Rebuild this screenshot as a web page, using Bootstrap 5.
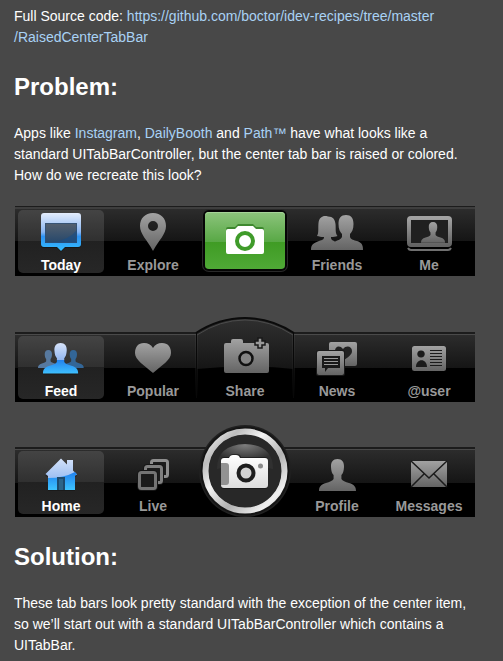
<!DOCTYPE html>
<html lang="en">
<head>
<meta charset="utf-8">
<meta name="viewport" content="width=device-width, initial-scale=1">
<title>Raised Center Tab Bar</title>
<link href="https://cdn.jsdelivr.net/npm/bootstrap@5.3.0/dist/css/bootstrap.min.css" rel="stylesheet">
<style>
body{background:#484848;color:#fff;font:14px/21px "Liberation Sans",Arial,sans-serif}
.article{padding:6px 28px 0 14px}
.article p{margin:0}
.article a{color:#a9d2f5;text-decoration:none}
.article h2{font-size:24px;line-height:28px;font-weight:700;margin:25px 0 22px}
.tabbar{margin:0 0 0 1px;height:70px;background:linear-gradient(#1c1c1c 0 1px,#3e3e3e 1px 3px,#2c2c2c 3px,#151515 35px,#000 35px)}
.tabbar.thin{background:linear-gradient(#1c1c1c 0 2px,#4a4a4a 2px 3px,#2c2c2c 3px,#151515 36px,#000 36px)}
.tabs-one{margin-top:20px}
.tabs-two{margin-top:56px}
.tabs-three{margin-top:45px}
.article .tabs-three + h2{margin-top:26px}
.tab{flex:1 1 0;min-width:0;margin:4px 3px 3px;padding:0;border:0;border-radius:5px;background:none;color:#999;font-weight:700;line-height:16px}
.tab svg{width:86px;height:47px;flex:none;overflow:visible}
.tab.current{color:#fff;background:linear-gradient(#444,#303030 31px,#212121 31px,#272727)}
.tab .raised{position:absolute;left:50%;bottom:-3px;transform:translateX(-50%);width:104px;height:96px}
.tab .front{position:relative}
.green-key{margin:2px 3px 4px;flex:1;border-radius:4px;background:linear-gradient(#8cc47c,#58a845 30px,#3f9b24 30px,#4fa936);box-shadow:inset 0 1px #a5d398,0 0 0 2px #050505,0 0 0 3px #292929}
.green-key svg{width:80px;height:57px}
</style>
<script src="https://cdn.jsdelivr.net/npm/bootstrap@5.3.0/dist/js/bootstrap.bundle.min.js"></script>
</head>
<body>
<svg class="position-absolute" width="0" height="0" aria-hidden="true">
  <defs>
    <linearGradient id="grey" x1="0" y1="0" x2="0" y2="1"><stop stop-color="#a2a2a2"/><stop offset="1" stop-color="#646464"/></linearGradient>
    <linearGradient id="pale" x1="0" y1="0" x2="0" y2="1"><stop stop-color="#d4e2fa"/><stop offset=".6" stop-color="#9fc0f2"/><stop offset="1" stop-color="#7fb0f2"/></linearGradient>
    <linearGradient id="azure" x1="0" y1="0" x2="0" y2="1"><stop stop-color="#2080ee"/><stop offset="1" stop-color="#3ec4ff"/></linearGradient>
    <linearGradient id="bubble" x1="0" y1="0" x2="0" y2="1"><stop stop-color="#e4edfc"/><stop offset=".5" stop-color="#8ab6f2"/><stop offset=".62" stop-color="#2d93f3"/><stop offset="1" stop-color="#35bdff"/></linearGradient>
    <linearGradient id="screen" x1="0" y1="0" x2="0" y2="1"><stop stop-color="#56616f"/><stop offset="1" stop-color="#25476b"/></linearGradient>
    <linearGradient id="duo" gradientUnits="userSpaceOnUse" x1="0" y1="0" x2="0" y2="32"><stop stop-color="#d7e3fa"/><stop offset=".55" stop-color="#93b7ef"/><stop offset=".57" stop-color="#2483ee"/><stop offset="1" stop-color="#3ec0ff"/></linearGradient>
    <linearGradient id="dome" gradientUnits="userSpaceOnUse" x1="0" y1="12" x2="0" y2="62"><stop stop-color="#303030"/><stop offset="1" stop-color="#161616"/></linearGradient>
    <linearGradient id="fade" gradientUnits="userSpaceOnUse" x1="0" y1="27" x2="0" y2="92"><stop stop-color="#444"/><stop offset="1" stop-color="#000"/></linearGradient>
    <linearGradient id="steel" x1="0" y1="0" x2="1" y2="1"><stop stop-color="#fafafa"/><stop offset=".2" stop-color="#bdbdbd"/><stop offset=".38" stop-color="#f4f4f4"/><stop offset=".62" stop-color="#b2b2b2"/><stop offset=".85" stop-color="#f0f0f0"/><stop offset="1" stop-color="#c4c4c4"/></linearGradient>
    <radialGradient id="glass" cx=".5" cy=".05" r=".6"><stop stop-color="#7c7c7c"/><stop offset="1" stop-color="#303030"/></radialGradient>
    <linearGradient id="white" x1="0" y1="0" x2="0" y2="1"><stop stop-color="#fff"/><stop offset="1" stop-color="#dcdcdc"/></linearGradient>
    <path id="person" d="M18.5 0C23 0 25.3 3.2 25 8c-.2 4-1 6.500-2.600 8v4c1 2 4 2.800 7.600 4 5 1.600 7 3.500 7 8H0c0-4.500 2-6.400 7-8 3.600-1.200 6.600-2 7.600-4v-4C13 14.500 12.200 12 12 8c-.3-4.800 2-8 6.500-8z"/>
  </defs>
</svg>
<main class="article">
  <p>Full Source code: <a href="#source">https://github.com/boctor/idev-recipes/tree/master<wbr>/RaisedCenterTabBar</a></p>
  <h2>Problem:</h2>
  <p>Apps like <a href="#instagram">Instagram</a>, <a href="#dailybooth">DailyBooth</a> and <a href="#path">Path™</a> have what looks like a standard UITabBarController, but the center tab bar is raised or colored. How do we recreate this look?</p>

  <nav class="tabbar tabs-one d-flex" aria-label="Instagram tabs">
    <button type="button" class="tab current d-flex flex-column align-items-center">
      <svg viewBox="0 0 86 47" aria-hidden="true"><path d="M26 4h34q3 0 3 3v28q0 3-3 3H47l-4 4-4-4H26q-3 0-3-3V7q0-3 3-3z" fill="#0b0b0b" opacity=".5"/><path d="M26 3h34q3 0 3 3v28q0 3-3 3H47l-4 4-4-4H26q-3 0-3-3V6q0-3 3-3z" fill="url(#bubble)"/><path d="M27 13h32v20H27z" fill="url(#screen)"/><path d="M59 20v13H33q18-3 26-13z" fill="#174f88" opacity=".6"/><path d="M27.500 13.500h31v19h-31z" fill="none" stroke="#2c5078" opacity=".7"/></svg>
      <span>Today</span></button>
    <button type="button" class="tab d-flex flex-column align-items-center">
      <svg viewBox="0 0 86 47" aria-hidden="true"><path fill="url(#grey)" fill-rule="evenodd" d="M43 3c8 0 13 5.500 13 13 0 8-7 14-13 25-6-11-13-17-13-25C30 8.500 35 3 43 3zm0 8a5 5 0 1 0 0 10 5 5 0 0 0 0-10z"/></svg>
      <span>Explore</span></button>
    <button type="button" class="tab d-flex" aria-label="Camera">
      <span class="green-key d-flex justify-content-center"><svg viewBox="0 0 80 57" aria-hidden="true"><path d="M23 16q-2 0-2 2v22q0 2 2 2h34q2 0 2-2V18q0-2-2-2h-6l-3-3H33l-3 3z" fill="#28751a" opacity=".7" transform="translate(0 -1)"/><path d="M23 17q-2 0-2 2v21q0 2 2 2h34q2 0 2-2V19q0-2-2-2h-6l-3-3H33l-3 3z" fill="#fff"/><circle cx="40" cy="29" r="8" fill="#fff" stroke="#3f9b2a" stroke-width="4"/></svg></span>
    </button>
    <button type="button" class="tab d-flex flex-column align-items-center">
      <svg viewBox="0 0 86 47" aria-hidden="true"><path fill="url(#grey)" d="M17 40c0-6 3-7 8-9 4-1 5-2 5-4-3 0-5-.5-7-1 2-3 1-8 1.500-13C25 8 28 6 31 6c1 0 2 0 3 .5 5 0 7 3 7.500 7.500.5 5-.5 9 2 12-2 .7-4 1-6.500 1 0 3 1 3 4 4.500 3-1.500 6-2 7-4.500v-3c-2-2-3.500-5-3.500-10C44.500 8 47 5 52 5s7.500 3 7.500 9c0 5-1.500 8-3.500 10v3c1 3 4 3 7 4 4 1.500 6 3 6 9z"/></svg>
      <span>Friends</span></button>
    <button type="button" class="tab d-flex flex-column align-items-center">
      <svg viewBox="0 0 86 47" aria-hidden="true"><rect x="23" y="8" width="41" height="27" rx="2" fill="#202020" stroke="url(#grey)" stroke-width="4"/><path d="M22 38q1 2 3 2h37q2 0 3-2" fill="none" stroke="#707070" stroke-width="2"/><use href="#person" fill="url(#grey)" transform="translate(35 12) scale(.65)"/></svg>
      <span>Me</span></button>
  </nav>

  <nav class="tabbar thin tabs-two d-flex" aria-label="DailyBooth tabs">
    <button type="button" class="tab current d-flex flex-column align-items-center">
      <svg viewBox="0 0 86 47" aria-hidden="true"><use href="#person" fill="#57799f" transform="translate(20 14) scale(.56)"/><use href="#person" fill="#336697" transform="translate(45 14) scale(.56)"/><use href="#person" fill="#111" opacity=".5" transform="translate(25 8) scale(.95)"/><use href="#person" fill="url(#duo)" transform="translate(25 7) scale(.95)"/></svg>
      <span>Feed</span></button>
    <button type="button" class="tab d-flex flex-column align-items-center">
      <svg viewBox="0 0 86 47" aria-hidden="true"><path fill="url(#grey)" d="M43 12C45 8.500 48 7 52 7c6 0 9 4 9 10 0 7-9 12-18 20-9-8-18-13-18-20 0-6 3-10 9-10 4 0 7 1.500 9 5z"/></svg>
      <span>Popular</span></button>
    <button type="button" class="tab position-relative d-flex flex-column align-items-center">
      <svg class="raised" viewBox="0 0 104 96" aria-hidden="true"><path d="M3 96V27Q26 12 52 12T101 27v69z" fill="#000"/><path d="M3 63V27Q26 12 52 12T101 27v36Q52 58 3 63z" fill="url(#dome)"/><path d="M3 27Q26 12 52 12T101 27" fill="none" stroke="#0b0b0b" stroke-width="2"/><path d="M4 29Q27 14 52 14t48 15" fill="none" stroke="#4b4b4b"/><path d="M3.500 27v65M100.500 27v65" stroke="#080808"/><path d="M4.500 29v61M99.500 29v61M2.500 29v61M101.500 29v61" stroke="url(#fade)" opacity=".5"/></svg>
      <svg class="front" viewBox="0 0 86 47" aria-hidden="true"><path d="M24 7h5V5q0-2 2-2h8q2 0 2 2v2h24q2 0 2 2v26q0 2-2 2H24q-2 0-2-2V9q0-2 2-2z" fill="url(#grey)"/><circle cx="44" cy="22.500" r="6.500" fill="#858585" stroke="#111" stroke-width="2.500"/><path d="M56 2h4v3h3v4h-3v3h-4V9h-3V5h3z" fill="#999" stroke="#181818" stroke-width="1.500"/></svg>
      <span class="front">Share</span></button>
    <button type="button" class="tab d-flex flex-column align-items-center">
      <svg viewBox="0 0 86 47" aria-hidden="true"><rect x="35" y="6" width="28" height="24" rx="2" fill="url(#grey)"/><path d="M49 13c3-4 9-3 9 2 0 4-4 6-9 10-5-4-8-6-8-10 0-5 5-6 8-2z" fill="#222"/><rect x="22" y="14" width="29" height="26" rx="2.500" fill="#191919"/><rect x="23" y="15" width="27" height="24" rx="2" fill="url(#grey)"/><path d="M28 20h18v12H34l-3 4v-4h-3z" fill="#191919"/><path d="M30 22.500h14M30 25.500h14M30 28.500h14" stroke="#999"/></svg>
      <span>News</span></button>
    <button type="button" class="tab d-flex flex-column align-items-center">
      <svg viewBox="0 0 86 47" aria-hidden="true"><rect x="26" y="10" width="34" height="25" rx="2.500" fill="url(#grey)"/><path d="M35 14.500c5 0 5 7 0 7s-5-7 0-7zM30 31c0-9 11-9 11 0zM44 14h12v1H44zm0 3h12v1H44zm0 3h12v1H44zm0 3h12v1H44zm0 3h12v1H44zm0 3h12v1H44z" fill="#1b1b1b"/></svg>
      <span>@user</span></button>
  </nav>

  <nav class="tabbar thin tabs-three d-flex" aria-label="Path tabs">
    <button type="button" class="tab current d-flex flex-column align-items-center">
      <svg viewBox="0 0 86 47" aria-hidden="true"><path d="M27 25 43 9l6 6v-5h6v10l4 5-2 1v14H30V26z" fill="#111" opacity=".5"/><path d="M27.500 23 43 7.500l6 6V9h6v10.500l4 4-2 1V39H30V25z" fill="url(#pale)"/><path d="M30 27q16 0 27-6l2 2.500-2 1V39H30z" fill="url(#azure)"/><path d="M39 39V26h8v13z" fill="#1e4a6c"/><path d="M41 39V28h4v11z" fill="#2d6488"/></svg>
      <span>Home</span></button>
    <button type="button" class="tab d-flex flex-column align-items-center">
      <svg viewBox="0 0 86 47" aria-hidden="true"><g fill="#1b1b1b" stroke-width="3"><rect x="41.500" y="9.500" width="16" height="16" rx="2" stroke="#8e8e8e"/><rect x="35.500" y="15.500" width="16" height="16" rx="2" stroke="#161616" stroke-width="5"/><rect x="35.500" y="15.500" width="16" height="16" rx="2" stroke="#7f7f7f"/><rect x="29.500" y="21.500" width="16" height="16" rx="2" stroke="#161616" stroke-width="5"/><rect x="29.500" y="21.500" width="16" height="16" rx="2" stroke="#747474"/></g></svg>
      <span>Live</span></button>
    <button type="button" class="tab position-relative d-flex" aria-label="Camera">
      <svg class="raised" viewBox="0 0 104 96" aria-hidden="true"><circle cx="52" cy="50" r="46" fill="#202020"/><circle cx="52" cy="50" r="44.500" fill="#151515"/><circle cx="52" cy="50" r="39.500" fill="#2b2b2b" stroke="url(#steel)" stroke-width="6"/><circle cx="52" cy="50" r="36" fill="#282828"/><path d="M24 48q0-24 28-25 28 1 28 25-28-8-56 0z" fill="url(#glass)"/><path d="M31 36h5q1-3 4-3h4q3 0 4 3h24q3 0 3 3v26q0 3-3 3H31q-3 0-3-3V39q0-3 3-3z" fill="#111" opacity=".6"/><path d="M31 37h5q1-3 4-3h3q3 0 4 3h25q3 0 3 3v24q0 3-3 3H31q-3 0-3-3V40q0-3 3-3z" fill="url(#white)"/><path d="M28 42h5q3 0 3 3v16q0 3-3 3h-5z" fill="#929292"/><circle cx="53" cy="52" r="7.500" fill="#d2d2d2" stroke="#1d1d1d" stroke-width="4"/><circle cx="67.500" cy="45" r="2.500" fill="#8b8b8b"/></svg>
    </button>
    <button type="button" class="tab d-flex flex-column align-items-center">
      <svg viewBox="0 0 86 47" aria-hidden="true"><use href="#person" fill="url(#grey)" transform="translate(25 8)"/></svg>
      <span>Profile</span></button>
    <button type="button" class="tab d-flex flex-column align-items-center">
      <svg viewBox="0 0 86 47" aria-hidden="true"><rect x="25" y="10" width="36" height="26" rx="1" fill="url(#grey)"/><path d="m25 10 18 17 18-17M25 36l13-13M61 36 48 23" fill="none" stroke="#1b1b1b" stroke-width="1.500"/></svg>
      <span>Messages</span></button>
  </nav>

  <h2>Solution:</h2>
  <p>These tab bars look pretty standard with the exception of the center item, so we’ll start out with a standard UITabBarController which contains a UITabBar.</p>
</main>
</body>
</html>
